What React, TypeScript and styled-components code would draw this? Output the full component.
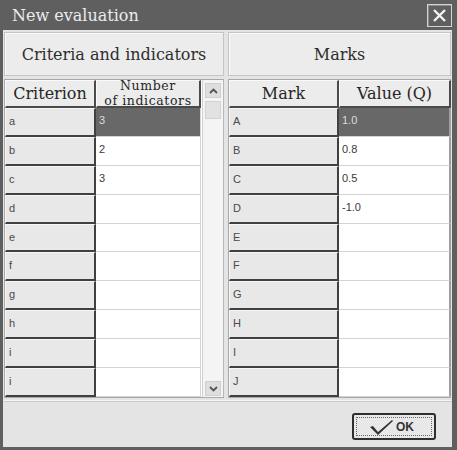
import React from 'react';
import styled, { createGlobalStyle } from 'styled-components';

const GlobalStyle = createGlobalStyle`
  html, body {
    margin: 0;
    padding: 0;
    background: #5f5f5f;
  }
`;

const Window = styled.div`
  width: 457px;
  height: 450px;
  background: #5f5f5f;
  display: flex;
  flex-direction: column;
  box-sizing: border-box;
  padding: 0 5px 3px 3px;
`;

const TitleBar = styled.div`
  height: 30px;
  display: flex;
  align-items: center;
  justify-content: space-between;
  padding: 0 0 0 9px;
  color: #ececec;
  font-family: 'DejaVu Serif', serif;
  font-size: 16px;
`;

const CloseButton = styled.div`
  width: 23px;
  height: 21px;
  border: 1px solid #d4d4d4;
  box-shadow: inset 1px 1px 0 #8a8a8a;
  display: flex;
  align-items: center;
  justify-content: center;
  margin-top: 1px;
`;

const Body = styled.div`
  flex: 1;
  background: #e4e4e4;
  display: flex;
  flex-direction: column;
  padding: 2px 1px 0 1px;
`;

const Columns = styled.div`
  display: grid;
  grid-template-columns: 220px 223px;
  gap: 4px;
`;

const Panel = styled.div`
  display: flex;
  flex-direction: column;
  gap: 3px;
`;

const SectionHeader = styled.div`
  height: 42px;
  background: #ececec;
  border: 1px solid #c4c4c4;
  box-shadow: inset 1px 1px 0 #fafafa;
  display: flex;
  align-items: center;
  justify-content: center;
  font-family: 'DejaVu Serif', serif;
  font-size: 16px;
  color: #2e2e2e;
`;

const TableWrap = styled.div`
  display: flex;
  height: 317px;
  border: 1px solid #a8a8a8;
  border-right: none;
  background: #fff;
`;

const Grid = styled.div<{ $cols: string }>`
  flex: 1;
  display: grid;
  grid-template-columns: ${(p) => p.$cols};
  grid-template-rows: 28px repeat(10, 1fr);
`;

const HeadCell = styled.div`
  background: #ececec;
  border-top: 1px solid #fafafa;
  border-left: 1px solid #fafafa;
  border-right: 2px solid #4a4a4a;
  border-bottom: 2px solid #4a4a4a;
  display: flex;
  flex-direction: column;
  align-items: center;
  justify-content: center;
  text-align: center;
  font-family: 'DejaVu Serif', serif;
  font-size: 16px;
  line-height: 18px;
  color: #262626;
  padding-top: 1px;
`;

const HeadLine = styled.span`
  display: block;
  font-size: 12.5px;
  line-height: 14.6px;
  letter-spacing: 0.6px;
  white-space: nowrap;
`;

const LabelCell = styled.div`
  background: #e8e8e8;
  border-top: 1px solid #f6f6f6;
  border-left: 1px solid #f6f6f6;
  border-right: 2px solid #404040;
  border-bottom: 2px solid #404040;
  font-family: 'Liberation Sans', sans-serif;
  font-size: 11px;
  color: #4a4a4a;
  padding: 6px 3px 0;
`;

const ValueCell = styled.div<{ $selected?: boolean; $last?: boolean }>`
  background: ${(p) => (p.$selected ? '#686868' : '#ffffff')};
  color: ${(p) => (p.$selected ? '#dcdcdc' : '#3a3a3a')};
  border-bottom: 1px solid #d4d4d4;
  border-right: ${(p) => (p.$last ? '2px solid #a0a0a0' : '1px solid #d4d4d4')};
  font-family: 'Liberation Sans', sans-serif;
  font-size: 11px;
  padding: 6px 3px 0;
`;

const ScrollBar = styled.div`
  width: 22px;
  background: #f4f4f4;
  border-left: 1px solid #d0d0d0;
  border-right: 1px solid #b8b8b8;
  display: flex;
  flex-direction: column;
  align-items: center;
  padding: 3px 0 1px;
  box-sizing: border-box;
`;

const ScrollButton = styled.div`
  width: 16px;
  height: 15px;
  background: #dedede;
  border: 1px solid #cfcfcf;
  box-sizing: border-box;
  display: flex;
  align-items: center;
  justify-content: center;
`;

const Thumb = styled.div`
  width: 16px;
  height: 18px;
  margin-top: 3px;
  background: #e2e2e2;
  border: 1px solid #d2d2d2;
  box-sizing: border-box;
`;

const Spacer = styled.div`
  flex: 1;
`;

const Footer = styled.div`
  flex: 1;
  margin-top: 2px;
  border-top: 1px solid #f6f6f6;
  box-shadow: inset 0 1px 0 #c8c8c8;
  display: flex;
  justify-content: flex-end;
  align-items: flex-start;
  padding: 12px 15px 0 0;
`;

const OkButton = styled.button`
  width: 84px;
  height: 27px;
  background: #e8e8e8;
  border: 2px solid #2e2e2e;
  border-radius: 3px;
  padding: 2px;
  box-sizing: border-box;
  cursor: pointer;
`;

const OkInner = styled.div`
  height: 100%;
  border: 1px dotted #666;
  box-sizing: border-box;
  display: flex;
  align-items: center;
  justify-content: center;
  gap: 2px;
  font-family: 'Liberation Sans Narrow', 'Liberation Sans', sans-serif;
  font-size: 12px;
  font-weight: bold;
  color: #333;
  padding-right: 6px;
`;

const Chevron = ({ up }: { up?: boolean }) => (
  <svg width="9" height="6" viewBox="0 0 9 6">
    <path
      d={up ? 'M1 5 L4.5 1.5 L8 5' : 'M1 1 L4.5 4.5 L8 1'}
      fill="none"
      stroke="#555"
      strokeWidth="1.8"
    />
  </svg>
);

const lower = ['a', 'b', 'c', 'd', 'e', 'f', 'g', 'h', 'i', 'i'];
const counts = ['3', '2', '3', '', '', '', '', '', '', ''];
const upper = ['A', 'B', 'C', 'D', 'E', 'F', 'G', 'H', 'I', 'J'];
const marks = ['1.0', '0.8', '0.5', '-1.0', '', '', '', '', '', ''];

export default function App() {
  return (
    <>
      <GlobalStyle />
      <Window>
        <TitleBar>
          <span>New evaluation</span>
          <CloseButton>
            <svg width="15" height="15" viewBox="0 0 15 15">
              <path d="M2 2 L13 13 M13 2 L2 13" stroke="#f2f2f2" strokeWidth="2.4" />
            </svg>
          </CloseButton>
        </TitleBar>
        <Body>
          <Columns>
            <Panel>
              <SectionHeader>Criteria and indicators</SectionHeader>
              <TableWrap>
                <Grid $cols="91px 105px">
                  <HeadCell>Criterion</HeadCell>
                  <HeadCell>
                    <HeadLine>Number</HeadLine>
                    <HeadLine>of indicators</HeadLine>
                  </HeadCell>
                  {lower.map((l, i) => (
                    <React.Fragment key={i}>
                      <LabelCell>{l}</LabelCell>
                      <ValueCell $selected={i === 0}>{counts[i]}</ValueCell>
                    </React.Fragment>
                  ))}
                </Grid>
                <ScrollBar>
                  <ScrollButton>
                    <Chevron up />
                  </ScrollButton>
                  <Thumb />
                  <Spacer />
                  <ScrollButton>
                    <Chevron />
                  </ScrollButton>
                </ScrollBar>
              </TableWrap>
            </Panel>
            <Panel>
              <SectionHeader>Marks</SectionHeader>
              <TableWrap>
                <Grid $cols="110px 1fr">
                  <HeadCell>Mark</HeadCell>
                  <HeadCell>Value (Q)</HeadCell>
                  {upper.map((l, i) => (
                    <React.Fragment key={i}>
                      <LabelCell>{l}</LabelCell>
                      <ValueCell $selected={i === 0} $last>
                        {marks[i]}
                      </ValueCell>
                    </React.Fragment>
                  ))}
                </Grid>
              </TableWrap>
            </Panel>
          </Columns>
          <Footer>
            <OkButton>
              <OkInner>
                <svg width="26" height="18" viewBox="0 0 26 18">
                  <path d="M2 9 L5 8 L10 14 L24 2 L25 3 L10 17 Z" fill="#333" />
                </svg>
                OK
              </OkInner>
            </OkButton>
          </Footer>
        </Body>
      </Window>
    </>
  );
}
